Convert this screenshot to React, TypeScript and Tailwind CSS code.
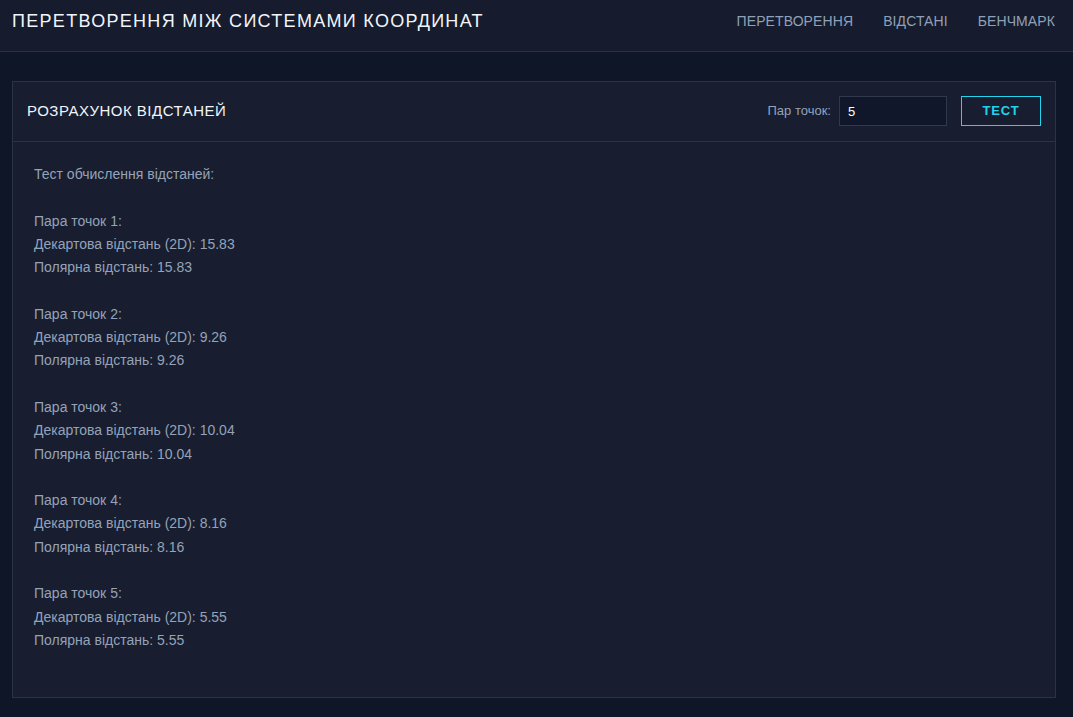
import { useState } from "react";

const pairs = [
  { id: 1, value: "15.83" },
  { id: 2, value: "9.26" },
  { id: 3, value: "10.04" },
  { id: 4, value: "8.16" },
  { id: 5, value: "5.55" },
];

const navItems = ["Перетворення", "Відстані", "Бенчмарк"];

function App() {
  const [count, setCount] = useState("5");

  return (
    <div
      className="min-h-[717px] bg-[#0f1628] text-[#94a3b8]"
      style={{ fontFamily: '"Liberation Sans", Arial, sans-serif' }}
    >
      <header className="h-[52px] flex items-center justify-between pl-3 pr-[18px] bg-[#161b2d] border-b border-[#2a3245]">
        <h1 className="text-[18px] tracking-[1.3px] uppercase text-[#f1f5f9] -mt-[8px]">
          Перетворення між системами координат
        </h1>
        <nav className="flex items-center gap-[30px] -mt-[8px]">
          {navItems.map((item) => (
            <a
              key={item}
              href="#"
              className="text-[14px] tracking-[0.1px] uppercase text-[#8fa1b8]"
            >
              {item}
            </a>
          ))}
        </nav>
      </header>

      <main className="pl-3 pr-[17px] pt-[29px] pb-5">
        <section className="bg-[#181d30] border border-[#2b3247]">
          <div className="h-[60px] flex items-center justify-between pl-[14px] pr-[14px] border-b border-[#2b3247]">
            <h2 className="text-[15px] tracking-[0.5px] uppercase text-[#f1f5f9]">
              Розрахунок відстаней
            </h2>
            <div className="flex items-center -mt-px">
              <label htmlFor="pairs" className="text-[13px] text-[#94a3b8] mr-2">
                Пар точок:
              </label>
              <input
                id="pairs"
                value={count}
                onChange={(e) => setCount(e.target.value)}
                className="w-[108px] h-[30px] px-2 text-[13px] text-white bg-[#10172a] border border-[#2f384d] outline-none"
              />
              <button className="ml-[14px] w-[80px] h-[30px] border border-[#22d3ee] text-[#22d3ee] text-[13px] font-bold tracking-[0.8px] uppercase">
                Тест
              </button>
            </div>
          </div>

          <div className="px-[21px] pt-[21px] pb-[45px] text-[14px] leading-[23.3px]">
            <p>Тест обчислення відстаней:</p>
            {pairs.map((p) => (
              <div key={p.id} className="mt-[23.3px]">
                <p>Пара точок {p.id}:</p>
                <p>Декартова відстань (2D): {p.value}</p>
                <p>Полярна відстань: {p.value}</p>
              </div>
            ))}
          </div>
        </section>
      </main>
    </div>
  );
}

export default App;
